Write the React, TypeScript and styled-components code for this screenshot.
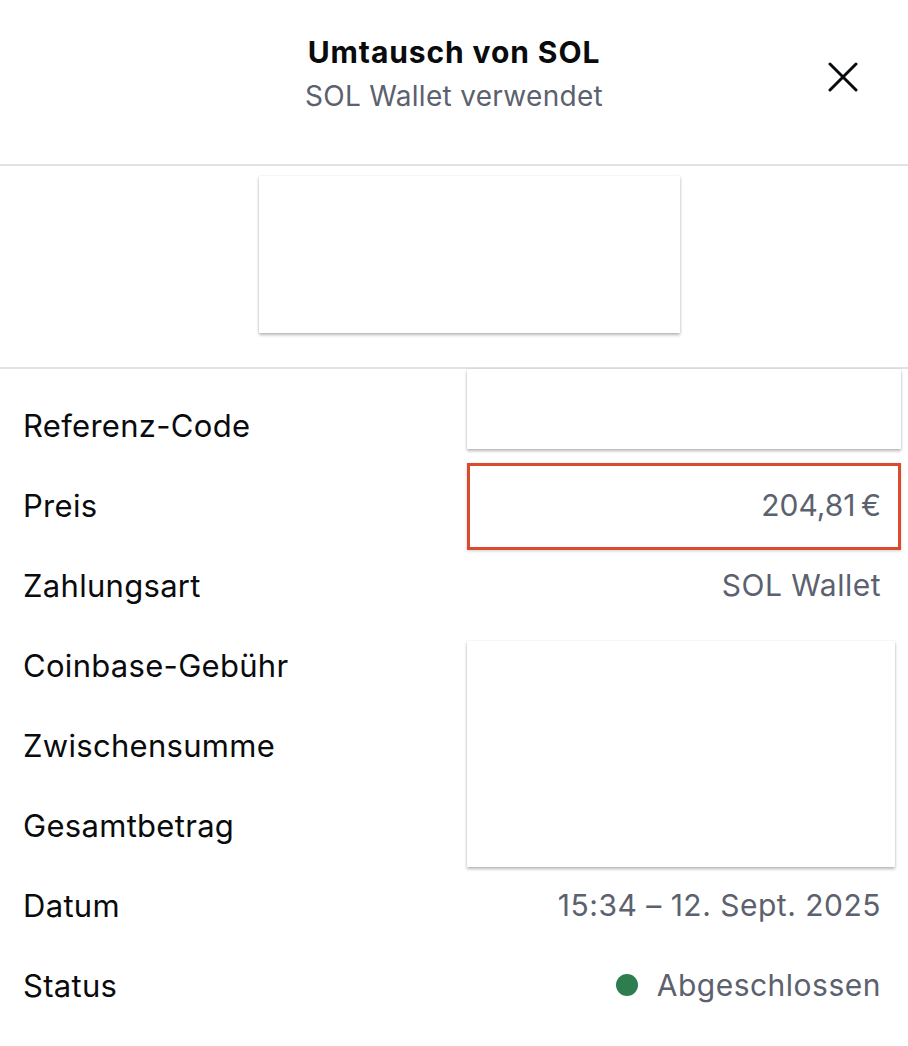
import React from "react";
import styled, { createGlobalStyle } from "styled-components";

const Global = createGlobalStyle`
  html, body { margin: 0; padding: 0; background: #ffffff; }
  body { font-family: Inter, "Noto Sans", "Liberation Sans", sans-serif; color: #0a0b0d; }
  * { box-sizing: border-box; }
`;

const Page = styled.div`
  width: 908px;
  height: 1046px;
  background: #ffffff;
  display: flex;
  flex-direction: column;
  overflow: hidden;
`;

const Header = styled.header`
  position: relative;
  height: 166px;
  border-bottom: 2px solid #e1e2e4;
  display: flex;
  flex-direction: column;
  align-items: center;
  padding-top: 33px;
`;

const Title = styled.h1`
  margin: 0;
  font-size: 30px;
  line-height: 38px;
  font-weight: 700;
  color: #0a0b0d;
  letter-spacing: 0.9px;
`;

const Subtitle = styled.div`
  margin-top: 7px;
  font-size: 28px;
  line-height: 36px;
  color: #5b616e;
  letter-spacing: 0.3px;
`;

const CloseButton = styled.button`
  position: absolute;
  right: 50px;
  top: 62px;
  width: 30px;
  height: 30px;
  padding: 0;
  border: none;
  background: transparent;
  display: flex;
  align-items: center;
  justify-content: center;
  cursor: pointer;
`;

const CardSection = styled.section`
  height: 203px;
  border-bottom: 2px solid #e1e2e4;
  display: flex;
  justify-content: flex-start;
  padding: 10px 0 0 259px;
`;

const BlankCard = styled.div`
  width: 421px;
  height: 157px;
  background: #ffffff;
  box-shadow: 0 2px 3px rgba(0, 0, 0, 0.28), 0 0 2px rgba(0, 0, 0, 0.08);
`;

const Details = styled.div`
  position: relative;
  display: flex;
  flex-direction: column;
  padding: 16px 27px 0 23px;
`;

const Row = styled.div<{ $highlight?: boolean }>`
  position: relative;
  height: 80px;
  display: flex;
  align-items: center;
  justify-content: space-between;
  ${(p) =>
    p.$highlight &&
    `
    &::after {
      content: "";
      position: absolute;
      left: 444px;
      right: -20px;
      top: -2px;
      height: 81px;
      border: 3px solid #da4a2d;
      box-shadow: 0 1px 3px rgba(0, 0, 0, 0.2);
      pointer-events: none;
    }
  `}
`;

const Label = styled.span`
  font-size: 31px;
  letter-spacing: 0.3px;
  color: #0a0b0d;
`;

const Value = styled.span`
  font-size: 30px;
  letter-spacing: 0.5px;
  color: #5b616e;
  display: flex;
  align-items: center;
  gap: 19px;
`;

const StatusDot = styled.span`
  width: 22px;
  height: 22px;
  border-radius: 50%;
  background: #2e7d4f;
`;

const Redaction = styled.div<{ $top: number; $left: number; $width: number; $height: number }>`
  position: absolute;
  top: ${(p) => p.$top}px;
  left: ${(p) => p.$left}px;
  width: ${(p) => p.$width}px;
  height: ${(p) => p.$height}px;
  background: #ffffff;
  box-shadow: 0 2px 3px rgba(0, 0, 0, 0.28), 0 0 2px rgba(0, 0, 0, 0.08);
  z-index: 2;
`;

const rows: { label: string; value?: React.ReactNode; highlight?: boolean }[] = [
  { label: "Referenz-Code" },
  { label: "Preis", value: "204,81\u202F€", highlight: true },
  { label: "Zahlungsart", value: "SOL Wallet" },
  { label: "Coinbase-Gebühr" },
  { label: "Zwischensumme" },
  { label: "Gesamtbetrag" },
  { label: "Datum", value: "15:34 – 12. Sept. 2025" },
  {
    label: "Status",
    value: (
      <>
        <StatusDot />
        Abgeschlossen
      </>
    ),
  },
];

export default function App() {
  return (
    <Page>
      <Global />
      <Header>
        <Title>Umtausch von SOL</Title>
        <Subtitle>SOL Wallet verwendet</Subtitle>
        <CloseButton aria-label="Schließen">
          <svg width="30" height="30" viewBox="0 0 30 30" fill="none">
            <path d="M2 2 L28 28 M28 2 L2 28" stroke="#0a0b0d" strokeWidth="3" strokeLinecap="round" />
          </svg>
        </CloseButton>
      </Header>
      <CardSection>
        <BlankCard />
      </CardSection>
      <Details>
        <Redaction $top={0} $left={467} $width={434} $height={80} />
        <Redaction $top={272} $left={467} $width={428} $height={226} />
        {rows.map((r) => (
          <Row key={r.label} $highlight={r.highlight}>
            <Label>{r.label}</Label>
            {r.value !== undefined && <Value>{r.value}</Value>}
          </Row>
        ))}
      </Details>
    </Page>
  );
}
